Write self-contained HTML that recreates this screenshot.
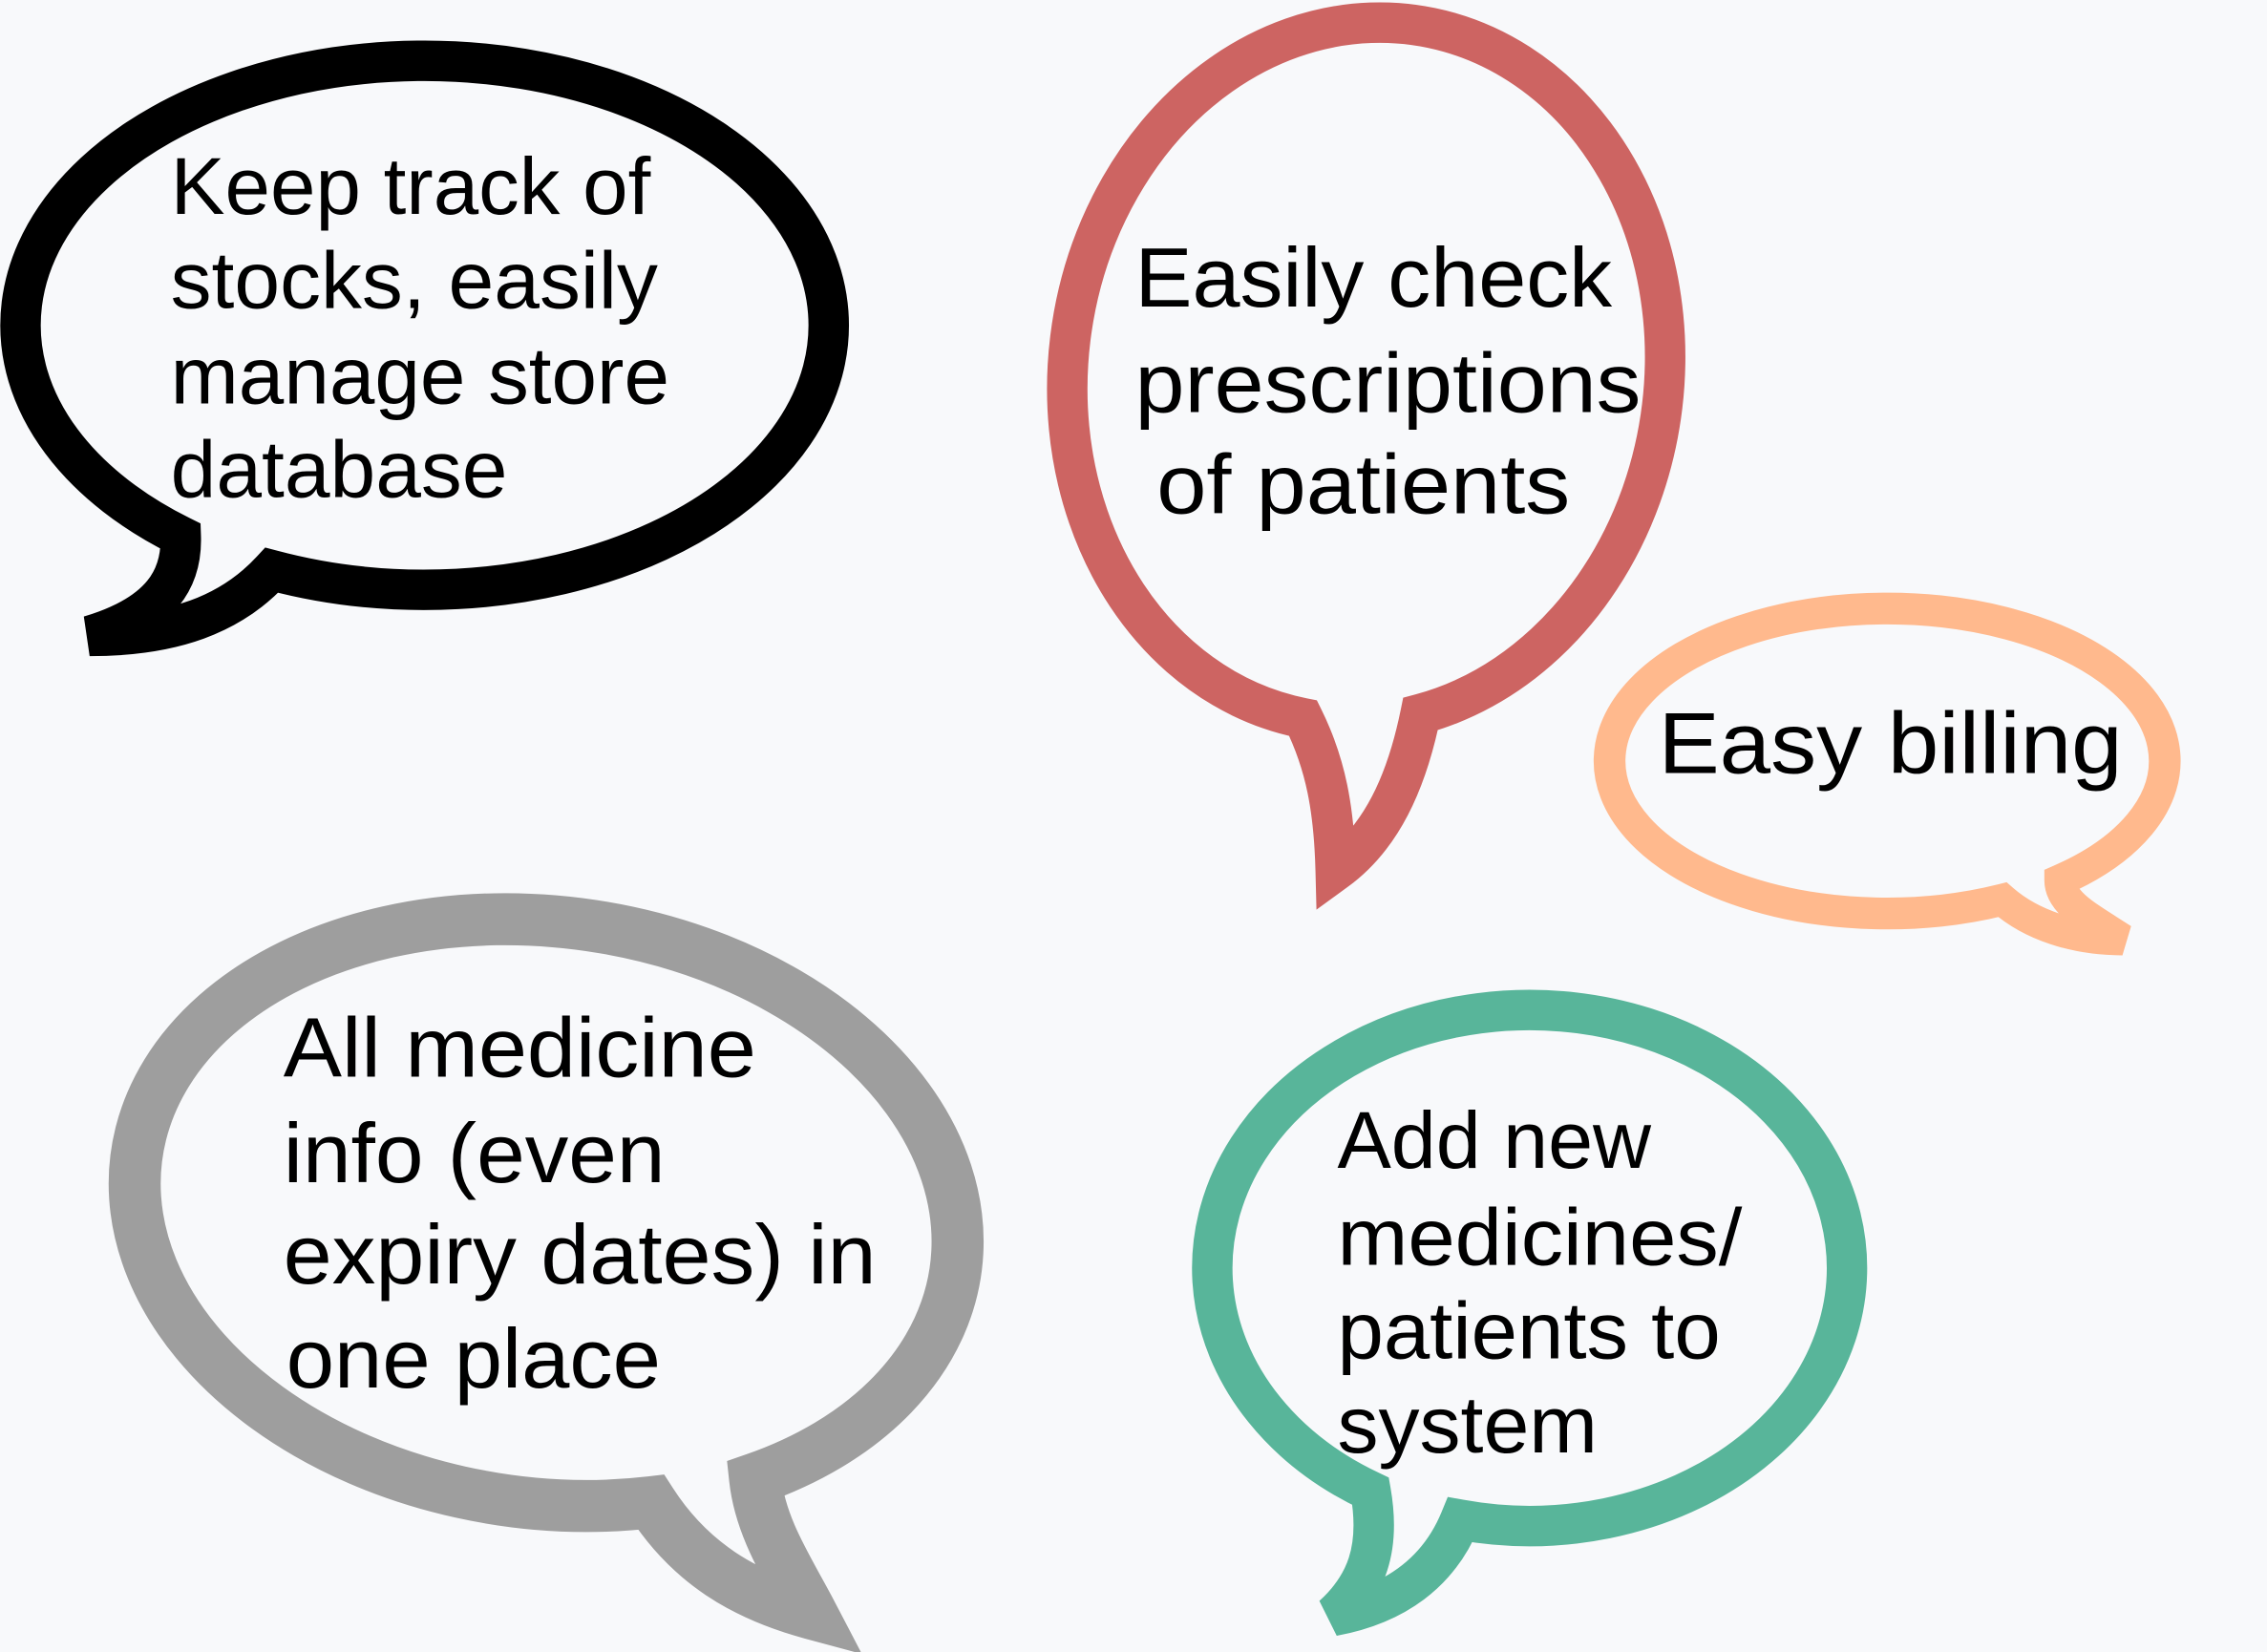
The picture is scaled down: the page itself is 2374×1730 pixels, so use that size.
<!DOCTYPE html>
<html><head><meta charset="utf-8"><style>
html,body{margin:0;padding:0;background:#f8f9fb;}
svg{display:block}
text{font-family:"Liberation Sans",sans-serif;fill:#000;}
</style></head><body>
<svg width="2374" height="1730" viewBox="0 0 1568 1143" preserveAspectRatio="none">
<rect width="1568" height="1143" fill="#f8f9fb"/>
<g fill="none" stroke-linejoin="miter" stroke-miterlimit="3">
<path d="M188,394.5 A279.5 183 0 1 0 125,371 C126,400 112,425 62,440 C120,440 160,425 188,394.5 Z" stroke="#000" stroke-width="28"/>
<path transform="rotate(8 945 258)" d="M1015,486.5 A206 243 0 1 0 935,500.7 C955,530 965,560 972,602 C1000,575 1012,535 1015,486.5 Z" stroke="#cd6462" stroke-width="28"/>
<path d="M1425,609 A192 105.5 0 1 0 1385,622.5 C1405,640 1435,650 1468,650 C1445,635 1425,625 1425,609 Z" stroke="#ffb98d" stroke-width="22"/>
<path transform="rotate(8 377.5 839)" d="M546.5,1001.2 A286 201 0 1 0 477.5,1027.3 C510,1065 550,1082 598,1088 C578,1060 555,1035 546.5,1001.2 Z" stroke="#9e9e9e" stroke-width="36"/>
<path d="M1010,1051.5 A219.5 178.5 0 1 0 948,1031.8 C955,1072 945,1097 922,1118 C965,1110 995,1088 1010,1051.5 Z" stroke="#58b59a" stroke-width="28"/>
</g>
<g font-size="56">
<text x="118" y="148" textLength="332" lengthAdjust="spacingAndGlyphs">Keep track of</text>
<text x="118" y="213" textLength="337" lengthAdjust="spacingAndGlyphs">stocks, easily</text>
<text x="118" y="279" textLength="345" lengthAdjust="spacingAndGlyphs">manage store</text>
<text x="118" y="344" textLength="233" lengthAdjust="spacingAndGlyphs">database</text>
</g>
<g font-size="58">
<text x="785" y="212" textLength="330" lengthAdjust="spacingAndGlyphs">Easily check</text>
<text x="785" y="285" textLength="350" lengthAdjust="spacingAndGlyphs">prescriptions</text>
<text x="800" y="355" textLength="286" lengthAdjust="spacingAndGlyphs">of patients</text>
</g>
<text x="1147" y="535" font-size="60" textLength="321" lengthAdjust="spacingAndGlyphs">Easy billing</text>
<g font-size="58">
<text x="196" y="745" textLength="327" lengthAdjust="spacingAndGlyphs">All medicine</text>
<text x="196" y="818" textLength="264" lengthAdjust="spacingAndGlyphs">info (even</text>
<text x="196" y="888" textLength="410" lengthAdjust="spacingAndGlyphs">expiry dates) in</text>
<text x="198" y="960" textLength="259" lengthAdjust="spacingAndGlyphs">one place</text>
</g>
<g font-size="56">
<text x="925" y="808" textLength="217" lengthAdjust="spacingAndGlyphs">Add new</text>
<text x="925" y="875" textLength="280" lengthAdjust="spacingAndGlyphs">medicines/</text>
<text x="925" y="940" textLength="265" lengthAdjust="spacingAndGlyphs">patients to</text>
<text x="925" y="1005" textLength="180" lengthAdjust="spacingAndGlyphs">system</text>
</g>
</svg>
</body></html>
